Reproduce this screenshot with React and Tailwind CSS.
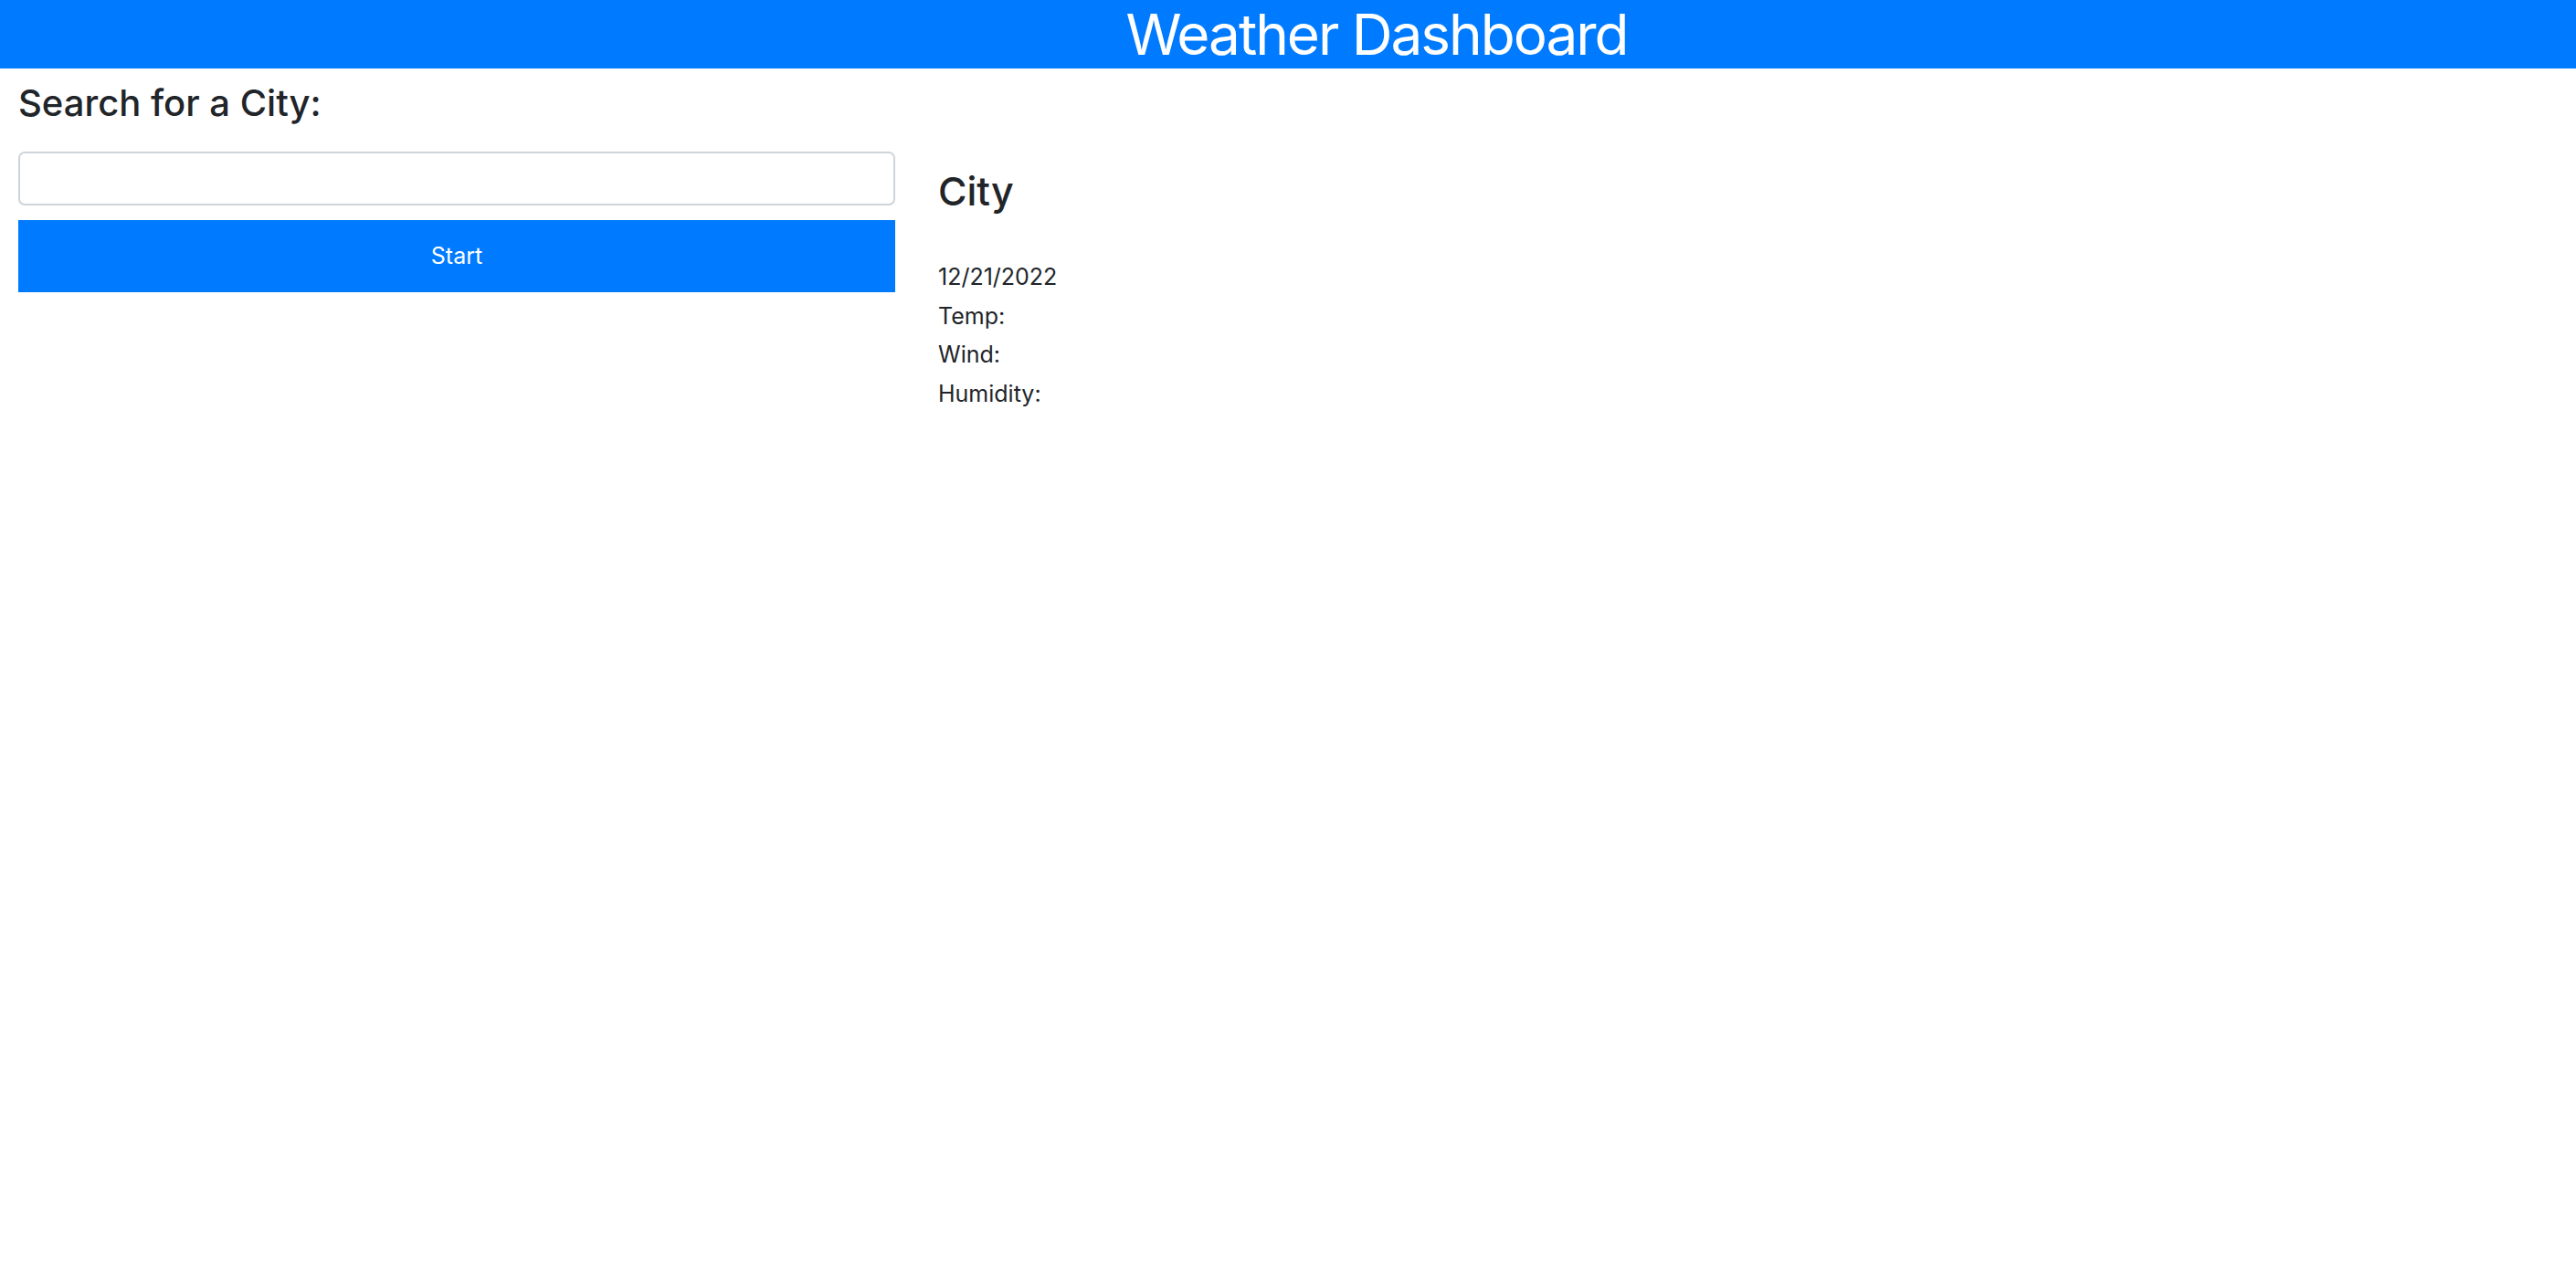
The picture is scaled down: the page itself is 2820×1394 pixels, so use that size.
export default function App() {
  return (
    <div className="min-h-screen bg-white font-['Inter',sans-serif] text-[#212529]">
      <header className="h-[75px] bg-[#007bff] text-white text-[62px] leading-[75px] text-center pl-[194px] font-normal tracking-[-2px]">
        Weather Dashboard
      </header>
      <div className="pl-[20px]">
        <h2 className="mt-[16px] text-[40px] leading-[44px] font-medium">Search for a City:</h2>
        <div className="flex">
          <div className="w-[960px] pt-[31px] flex flex-col gap-[16px]">
            <input
              type="text"
              className="h-[59px] w-full border-2 border-[#ced4da] rounded-[7px] bg-white px-4 outline-none"
            />
            <button className="h-[79px] w-full bg-[#007bff] text-white text-[25px]">Start</button>
          </div>
          <div className="ml-[47px] pt-[48px]">
            <h3 className="text-[43px] leading-[52px] font-medium">City</h3>
            <div className="mt-[47px] text-[25px] leading-[42.7px]">
              <p>12/21/2022</p>
              <p>Temp:</p>
              <p>Wind:</p>
              <p>Humidity:</p>
            </div>
          </div>
        </div>
      </div>
    </div>
  );
}
